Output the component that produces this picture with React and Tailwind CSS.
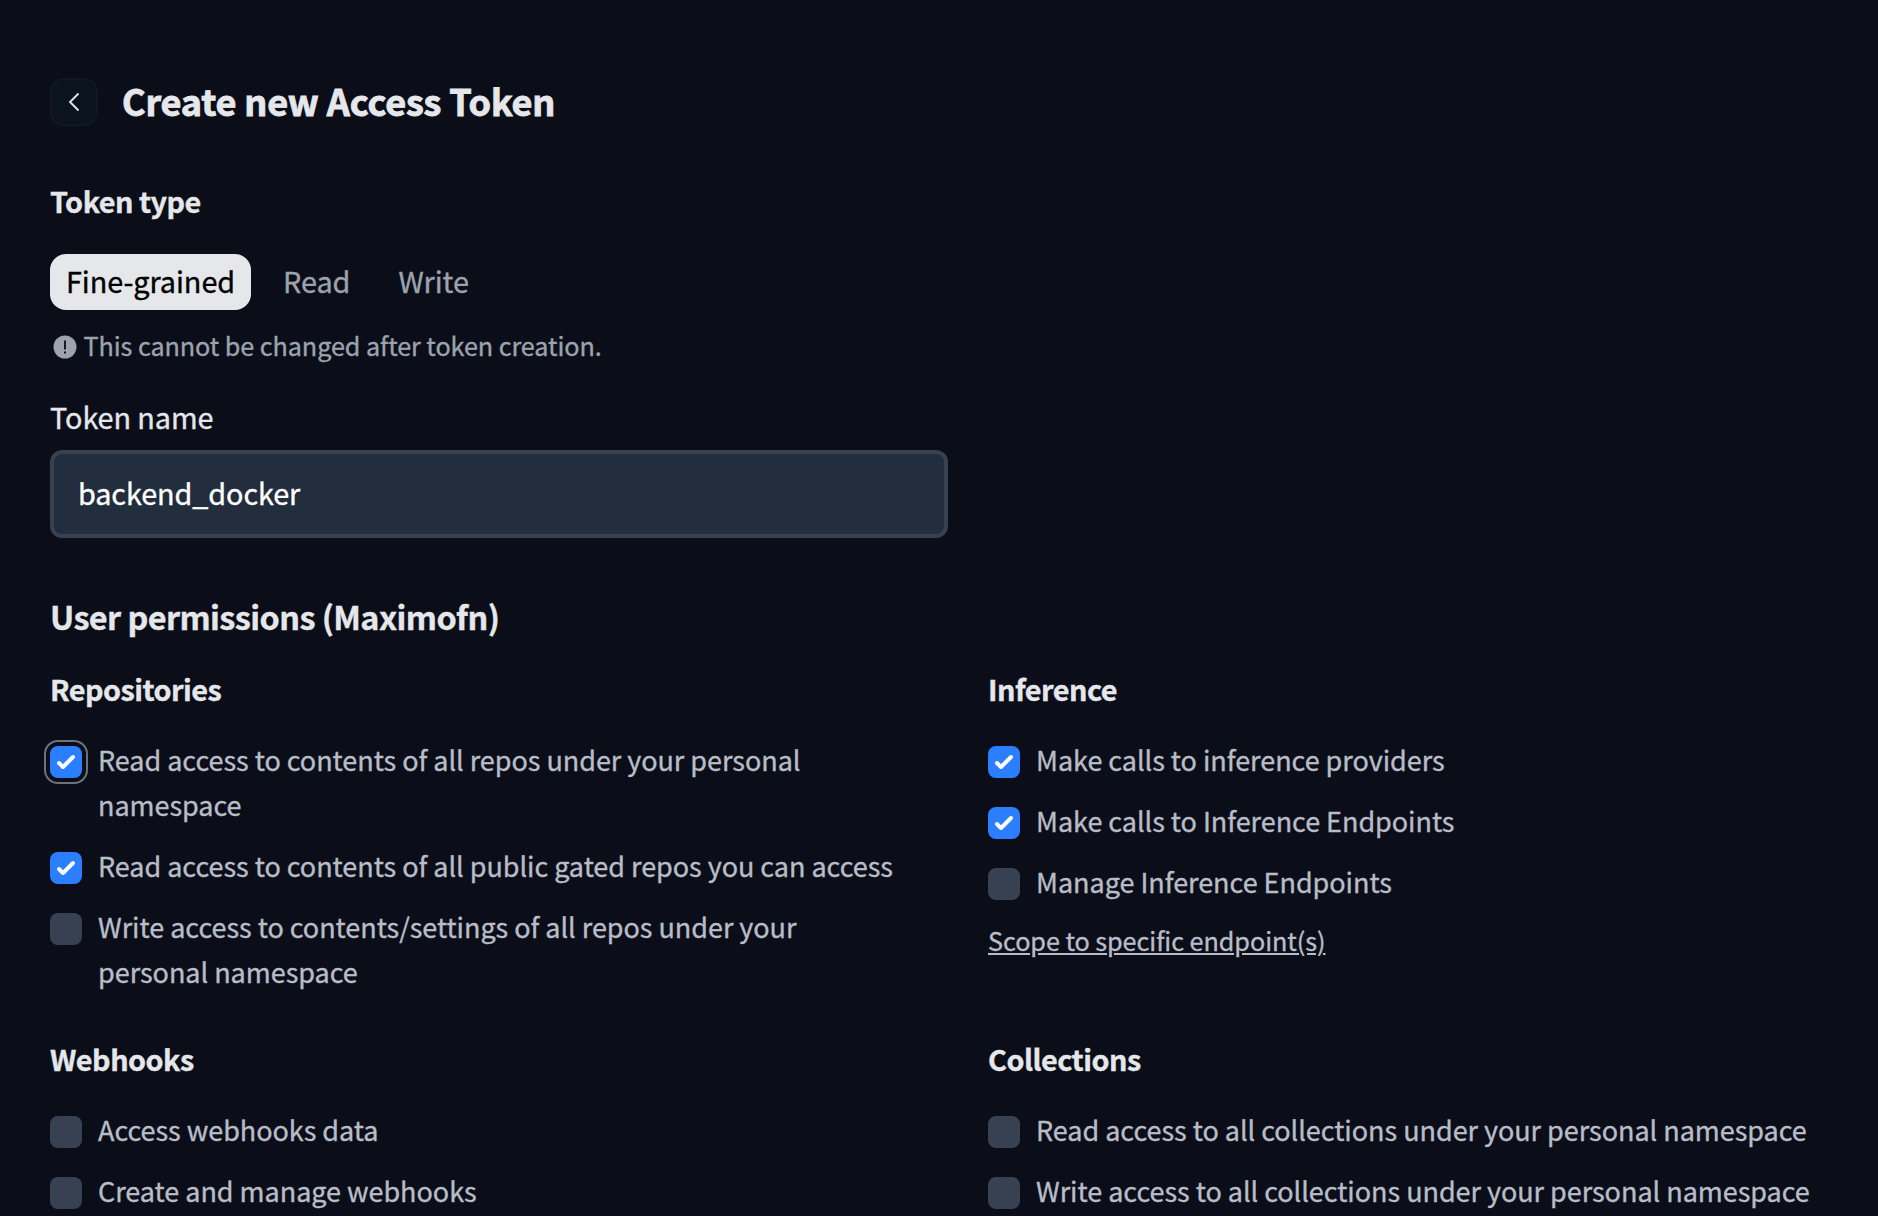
import React from "react";

const CheckMark = () => (
  <svg viewBox="0 0 16 16" className="size-8 fill-white">
    <path d="M12.207 4.793a1 1 0 0 1 0 1.414l-5 5a1 1 0 0 1-1.414 0l-2-2a1 1 0 0 1 1.414-1.414L6.5 9.086l4.293-4.293a1 1 0 0 1 1.414 0z" />
  </svg>
);

function Permission({ label, checked = false, focused = false }) {
  return (
    <label className="flex items-start gap-4 pr-[44px]">
      <span
        className={`mt-[9px] size-8 shrink-0 rounded-lg ${checked ? "bg-[#2b7fff]" : "bg-[#374151]"} ${
          focused ? "outline-2 outline-offset-4 outline-[#6b7280]" : ""
        }`}
      >
        {checked && <CheckMark />}
      </span>
      <span className="text-[27px] leading-[45px] tracking-[-0.035px] text-[#b8bdc8]">{label}</span>
    </label>
  );
}

function Group({ title, items, children }) {
  return (
    <section>
      <h3 className="text-[28.8px] leading-[48px] font-semibold tracking-[-0.5px] text-[#e5e7eb]">{title}</h3>
      <div className="mt-6 flex flex-col gap-4">
        {items.map((item) => (
          <Permission key={item.label} {...item} />
        ))}
      </div>
      {children}
    </section>
  );
}

export default function App() {
  return (
    <main className="h-[1216px] overflow-hidden bg-[#0b0e18] pt-[78px] pl-[50px] font-['Noto_Sans_CJK_SC',sans-serif] text-[#e5e7eb] [-webkit-text-stroke:0.35px]">
      <header className="flex h-12 items-center gap-6">
        <button className="flex size-12 items-center justify-center rounded-[14px] border-2 border-[#111823] bg-[#0b131f]">
          <svg viewBox="0 0 12 20" className="h-5 w-3 fill-none stroke-[#e5e7eb] stroke-[1.8]">
            <path d="M10.5 1.5 2 10l8.5 8.5" />
          </svg>
        </button>
        <h1 className="pb-[5px] text-[36px] leading-[48px] font-bold tracking-[-0.16px] [-webkit-text-stroke:0.9px]">
          Create new Access Token
        </h1>
      </header>

      <h2 className="mt-[51px] text-[28.8px] leading-[48px] font-semibold tracking-[-0.5px]">Token type</h2>
      <div className="mt-[29px] flex h-14 text-[28.8px] leading-[54px] tracking-[-0.06px] text-[#9ca3af]">
        <button className="rounded-2xl bg-[#e5e7eb] px-4 pb-0.5 text-black">Fine-grained</button>
        <button className="ml-4 px-4 pb-0.5">Read</button>
        <button className="ml-4 px-4 pb-0.5">Write</button>
      </div>
      <p className="mt-[14px] flex items-center gap-[7px] pl-[2.5px] text-[25.2px] leading-[42px] tracking-[-0.07px] text-[#9ca3af]">
        <svg viewBox="0 0 24 24" className="mt-1 size-6">
          <circle cx="12" cy="12" r="11.5" className="fill-[#9ca3af]" />
          <path d="M11.1 5.5h1.8v9h-1.8zM11 16.5h2v2h-2z" className="fill-[#0b0e18]" />
        </svg>
        <span>This cannot be changed after token creation.</span>
      </p>

      <p className="mt-[27px] text-[28.8px] leading-[48px] tracking-[-0.09px]">Token name</p>
      <div className="mt-[9px] h-[88px] w-[898px] rounded-xl border-4 border-[#374151] bg-[#222d3e] pl-6 text-[28.8px] leading-[78px] tracking-[-0.09px] text-white">
        backend_docker
      </div>

      <h2 className="mt-[51px] text-[32.4px] leading-[54px] font-semibold tracking-[-0.58px]">
        User permissions (Maximofn)
      </h2>
      <div className="mt-[22px] grid w-[1836px] grid-cols-2 gap-x-10 gap-y-[41px]">
        <Group
          title="Repositories"
          items={[
            { label: "Read access to contents of all repos under your personal namespace", checked: true, focused: true },
            { label: "Read access to contents of all public gated repos you can access", checked: true },
            { label: "Write access to contents/settings of all repos under your personal namespace" },
          ]}
        />
        <Group
          title="Inference"
          items={[
            { label: "Make calls to inference providers", checked: true },
            { label: "Make calls to Inference Endpoints", checked: true },
            { label: "Manage Inference Endpoints" },
          ]}
        >
          <a className="mt-[15px] block text-[25.2px] leading-[42px] tracking-[-0.05px] text-[#b8bdc8] underline">
            Scope to specific endpoint(s)
          </a>
        </Group>
        <Group title="Webhooks" items={[{ label: "Access webhooks data" }, { label: "Create and manage webhooks" }]} />
        <Group
          title="Collections"
          items={[
            { label: "Read access to all collections under your personal namespace" },
            { label: "Write access to all collections under your personal namespace" },
          ]}
        />
      </div>
    </main>
  );
}
